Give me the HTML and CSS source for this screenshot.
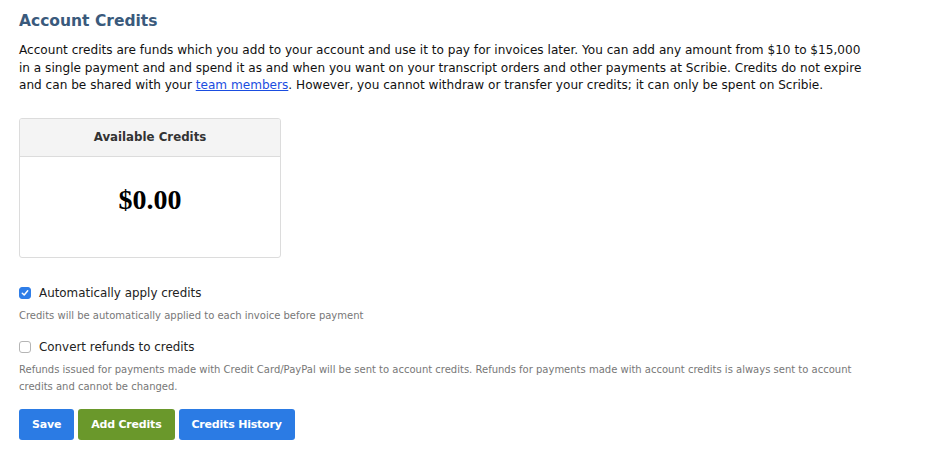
FILE: index.html
```html
<!DOCTYPE html>
<html lang="en">
<head>
  <meta charset="UTF-8">
  <title>Account Credits</title>
  <link rel="stylesheet" href="styles.css">
</head>
<body>
  <div class="page">
    <h2 class="title">Account Credits</h2>
    <p class="intro">Account credits are funds which you add to your account and use it to pay for invoices later. You can add any amount from $10 to $15,000 in a single payment and and spend it as and when you want on your transcript orders and other payments at Scribie. Credits do not expire and can be shared with your <a href="#">team members</a>. However, you cannot withdraw or transfer your credits; it can only be spent on Scribie.</p>

    <div class="credit-card">
      <div class="credit-head">Available Credits</div>
      <div class="credit-body">$0.00</div>
    </div>

    <div class="option">
      <label class="check">
        <span class="box checked">
          <svg width="8" height="8" viewBox="0 0 8 8"><path d="M1.3 4.2 L3.2 6 L6.7 1.8" fill="none" stroke="#fff" stroke-width="1.5" stroke-linecap="round" stroke-linejoin="round"/></svg>
        </span>
        Automatically apply credits
      </label>
      <p class="help">Credits will be automatically applied to each invoice before payment</p>
    </div>

    <div class="option">
      <label class="check">
        <span class="box"></span>
        Convert refunds to credits
      </label>
      <p class="help">Refunds issued for payments made with Credit Card/PayPal will be sent to account credits. Refunds for payments made with account credits is always sent to account credits and cannot be changed.</p>
    </div>

    <div class="actions">
      <button class="btn btn-blue">Save</button>
      <button class="btn btn-green">Add Credits</button>
      <button class="btn btn-blue">Credits History</button>
    </div>
  </div>
</body>
</html>
```

FILE: styles.css
```css
body {
  margin: 0;
  font-family: 'DejaVu Sans', Verdana, sans-serif;
  color: #222;
  background: #fff;
}
.page {
  padding: 9px 19px 0 19px;
  max-width: 850px;
}
.title {
  margin: 0;
  font-size: 15.5px;
  font-weight: bold;
  color: #3a5a7c;
  line-height: 24px;
}
.intro {
  margin: 9px 0 0 0;
  font-size: 12.1px;
  line-height: 17.5px;
  color: #111;
}
.intro a {
  color: #1a4de0;
}
.credit-card {
  width: 260px;
  margin-top: 23px;
  border: 1px solid #dcdcdc;
  border-radius: 3px;
  overflow: hidden;
}
.credit-head {
  background-color: #f4f4f4;
  border-bottom: 1px solid #dcdcdc;
  height: 37px;
  line-height: 37px;
  text-align: center;
  font-size: 11.8px;
  font-weight: bold;
  color: #333;
}
.credit-body {
  height: 100px;
  padding-top: 27px;
  box-sizing: border-box;
  text-align: center;
  font-family: 'Liberation Serif', 'Times New Roman', serif;
  font-weight: bold;
  font-size: 28px;
  color: #000;
}
.option {
  margin-top: 28px;
}
.option + .option {
  margin-top: 16px;
}
.check {
  display: flex;
  align-items: center;
  gap: 8px;
  font-size: 11.9px;
  color: #222;
  height: 14px;
}
.box {
  width: 12px;
  height: 12px;
  border: 1px solid #b5b5b5;
  border-radius: 3px;
  box-sizing: border-box;
  display: flex;
  align-items: center;
  justify-content: center;
  background: #fff;
}
.box.checked {
  background: #2f7ee8;
  border-color: #2f7ee8;
}
.help {
  margin: 7px 0 0 0;
  font-size: 10px;
  line-height: 17px;
  color: #777;
}
.actions {
  margin-top: 14px;
  display: flex;
  gap: 4px;
}
.btn {
  height: 31px;
  padding: 0 13px;
  border: none;
  border-radius: 3px;
  color: #fff;
  font-family: 'DejaVu Sans', Verdana, sans-serif;
  font-size: 11px;
  letter-spacing: -0.2px;
  font-weight: bold;
  cursor: pointer;
}
.btn-blue {
  background-color: #2b7be4;
}
.btn-green {
  background-color: #6a982b;
}
```
